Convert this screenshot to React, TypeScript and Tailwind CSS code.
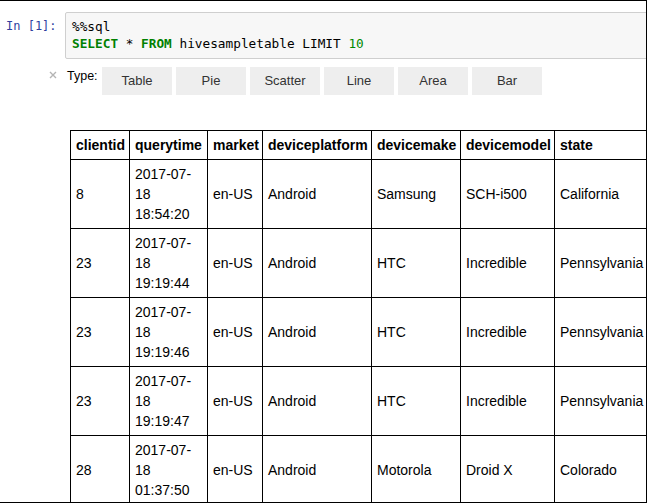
const chartTypes = ['Table', 'Pie', 'Scatter', 'Line', 'Area', 'Bar']

const columns = [
  { name: 'clientid', width: 59 },
  { name: 'querytime', width: 78 },
  { name: 'market', width: 55 },
  { name: 'deviceplatform', width: 109 },
  { name: 'devicemake', width: 89 },
  { name: 'devicemodel', width: 94 },
  { name: 'state', width: 93 },
]

const rows = [
  ['8', '18:54:20', 'en-US', 'Android', 'Samsung', 'SCH-i500', 'California'],
  ['23', '19:19:44', 'en-US', 'Android', 'HTC', 'Incredible', 'Pennsylvania'],
  ['23', '19:19:46', 'en-US', 'Android', 'HTC', 'Incredible', 'Pennsylvania'],
  ['23', '19:19:47', 'en-US', 'Android', 'HTC', 'Incredible', 'Pennsylvania'],
  ['28', '01:37:50', 'en-US', 'Android', 'Motorola', 'Droid X', 'Colorado'],
]

function App() {
  return (
    <div className="w-[647px] h-[503px] bg-white border-t border-r border-b border-black overflow-hidden">
      <div className="pt-[11px] w-[700px]">
        {/* Input cell */}
        <div className="flex items-start">
          <div className="w-[65px] pl-[6px] pt-[6px] leading-[17px] text-[12px] text-[#303F9F] font-['DejaVu_Sans_Mono',monospace] whitespace-pre">
            In [1]:
          </div>
          <div className="w-[620px] bg-[#f7f7f7] border border-[#cfcfcf] rounded-[2px] pl-[6px] pt-[5px] pb-[6px] font-['DejaVu_Sans_Mono',monospace] text-[12.75px] leading-[17px] text-black whitespace-pre">
            <div>%%sql</div>
            <div>
              <span className="text-[#008000] font-bold">SELECT</span> * <span className="text-[#008000] font-bold">FROM</span> hivesampletable LIMIT <span className="text-[#008800]">10</span>
            </div>
          </div>
        </div>

        {/* Chart type picker */}
        <div className="flex items-start mt-[8px] ml-[49px] font-['Liberation_Sans',Arial,sans-serif]">
          <svg width="8" height="8" viewBox="0 0 8 8" className="mt-[4px]">
            <path d="M1 1 L7 7 M7 1 L1 7" stroke="#b4b4b4" strokeWidth="1.4" />
          </svg>
          <div className="w-[35px] ml-[10px] pt-[2px] text-[12.5px] leading-[15px] text-black">Type:</div>
          <div className="flex gap-[4px]">
            {chartTypes.map((t) => (
              <div
                key={t}
                className="w-[70px] h-[28px] bg-[#eeeeee] flex items-center justify-center text-[13px] text-[#333]"
              >
                {t}
              </div>
            ))}
          </div>
        </div>

        {/* Result table */}
        <table className="table-fixed w-[577px] ml-[70px] mt-[35px] border-collapse border border-black font-['Liberation_Sans',Arial,sans-serif] text-[14px] leading-[20px] text-black">
          <colgroup>
            {columns.map((c) => (
              <col key={c.name} style={{ width: c.width }} />
            ))}
          </colgroup>
          <thead>
            <tr>
              {columns.map((c) => (
                <th key={c.name} className="border border-black px-[5px] py-[4px] text-left font-bold align-middle whitespace-nowrap">
                  {c.name}
                </th>
              ))}
            </tr>
          </thead>
          <tbody>
            {rows.map((r, i) => (
              <tr key={i}>
                {r.map((cell, j) => (
                  <td key={j} className="border border-black px-[5px] py-[4px] align-middle whitespace-nowrap">
                    {j === 1 ? (
                      <>
                        2017-07-
                        <br />
                        18
                        <br />
                        {cell}
                      </>
                    ) : (
                      cell
                    )}
                  </td>
                ))}
              </tr>
            ))}
          </tbody>
        </table>
      </div>
    </div>
  )
}

export default App
